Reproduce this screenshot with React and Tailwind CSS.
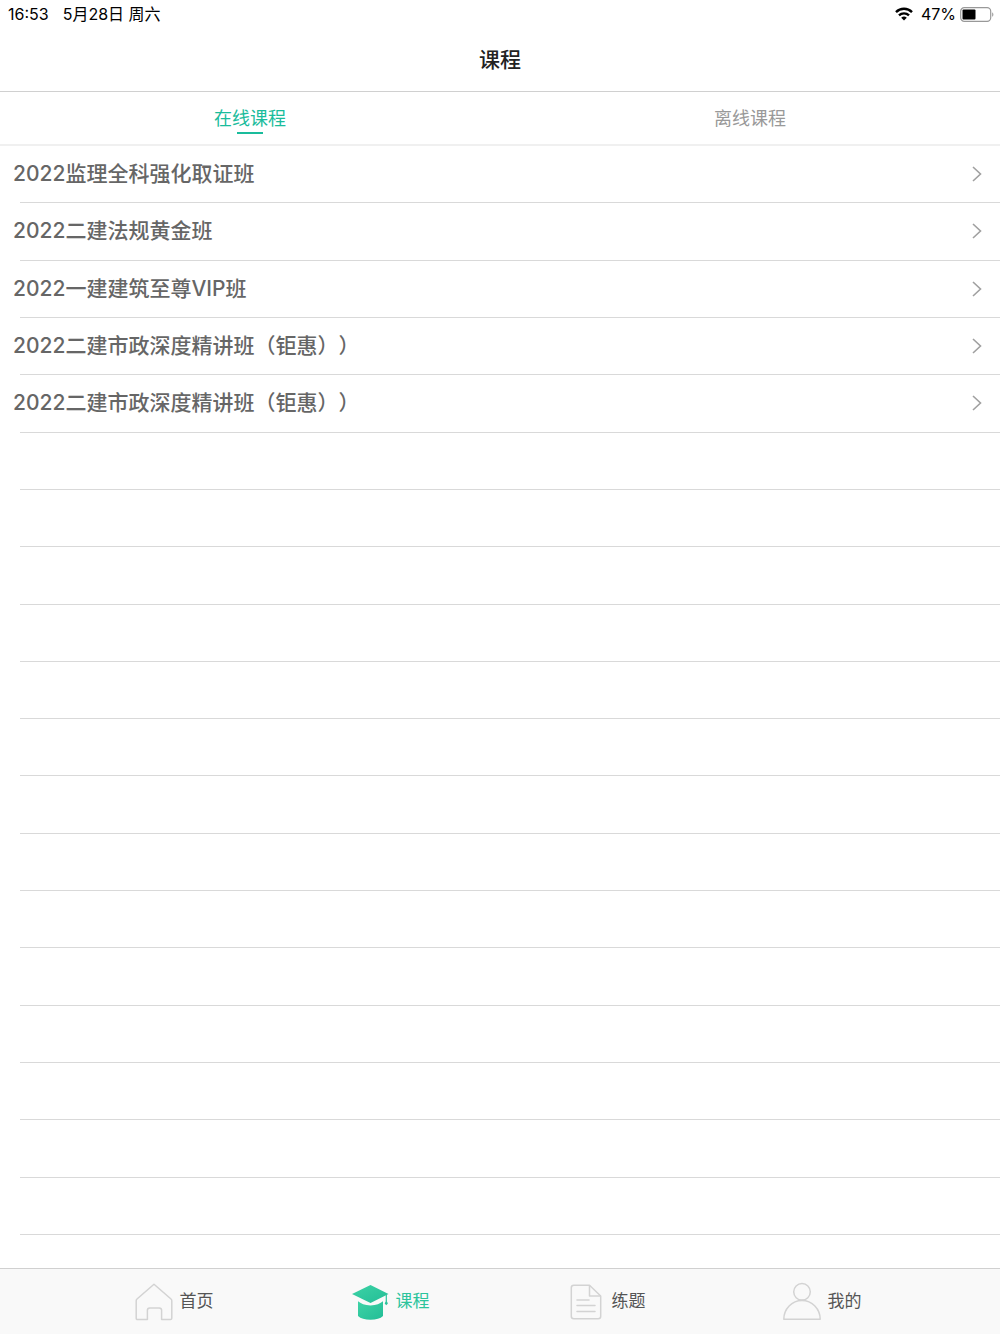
import React, { useState } from "react";

const courses = [
  "2022监理全科强化取证班",
  "2022二建法规黄金班",
  "2022一建建筑至尊VIP班",
  "2022二建市政深度精讲班（钜惠））",
  "2022二建市政深度精讲班（钜惠））",
];

// the list always shows this many lines, filled or not
const ROWS = 19;

const StatusBar = () => (
  <div className="flex h-7 items-center justify-between pl-2 pr-1.5 text-base text-black">
    <div className="flex gap-3.5">
      <span>16:53</span>
      <span>5月28日 周六</span>
    </div>
    <div className="flex items-center">
      <svg className="mr-2 h-[14px] w-[18px]" viewBox="0 0 18 14">
        <g fill="none" stroke="#000" strokeWidth="2.4">
          <path d="M1 5.100a11.400 11.400 0 0 1 16 0" />
          <path d="M4 8.400a7.200 7.200 0 0 1 10 0" />
        </g>
        <path d="M9 13.600 6.200 10.800a4 4 0 0 1 5.600 0Z" fill="#000" />
      </svg>
      <span className="mr-1">47%</span>
      <svg className="h-[15px] w-[34px]" viewBox="0 0 34 15">
        <rect x="0.7" y="0.7" width="30" height="13.6" rx="3.6" fill="none" stroke="#999" strokeWidth="1.2" />
        <rect x="2.5" y="2.5" width="13" height="10" rx="1" fill="#000" />
        <path d="M32.200 5.200c1.600.7 1.600 3.900 0 4.600Z" fill="#999" />
      </svg>
    </div>
  </div>
);

const HomeIcon = () => (
  <svg className="h-10 w-[38px]" viewBox="0 0 38 40" fill="none" stroke="#d3d3d3" strokeWidth="1.5" strokeLinejoin="round">
    <path d="M19 2.200 36 17q.8.7.8 1.800v17.400q0 1.400-1.400 1.400h-8.800V28.300q0-2.300-2.300-2.300h-9.600q-2.300 0-2.300 2.300v9.300H2.600q-1.400 0-1.400-1.400V18.800q0-1.100.8-1.800Z" />
  </svg>
);

const CourseIcon = () => (
  <svg className="h-10 w-[38px]" viewBox="0 0 38 40">
    <defs>
      <linearGradient id="cap" x1="0" y1="0" x2="1" y2="1">
        <stop offset="0" stopColor="#3ed3a6" />
        <stop offset="1" stopColor="#22bd96" />
      </linearGradient>
    </defs>
    <path d="M19.500 3 37.500 12 19.500 21 1 12Z" fill="url(#cap)" />
    <path d="M7 19.200Q11 22.800 19.500 23.600 28 22.800 32 19.200V34Q28 37.800 19.500 37.800T7 34Z" fill="url(#cap)" />
    <path d="M35.300 12.500V19" stroke="#2cc49c" strokeWidth="1.2" />
    <path d="m35.300 18 1.600 3.400-1.600 1.800-1.600-1.800Z" fill="#2cc49c" />
  </svg>
);

const PracticeIcon = () => (
  <svg className="h-10 w-[38px]" viewBox="0 0 38 40" fill="none" stroke="#d3d3d3" strokeWidth="1.5" strokeLinejoin="round">
    <path d="M22.500 3.300H6.800Q4.300 3.300 4.300 5.800v28.400q0 2.500 2.500 2.500h24.400q2.500 0 2.500-2.500V14Z" />
    <path d="M22.500 3.300V14h11.200" />
    <path d="M10 18h12M10 23.500h18M10 29.500h18" strokeLinecap="round" />
  </svg>
);

const MineIcon = () => (
  <svg className="h-10 w-[38px]" viewBox="0 0 38 40" fill="none" stroke="#d3d3d3" strokeWidth="1.5" strokeLinejoin="round">
    <circle cx="19" cy="9.800" r="8.300" />
    <path d="M.8 37.200a18.200 18.800 0 0 1 36.400 0Z" />
  </svg>
);

const menu = [
  { title: "首页", icon: <HomeIcon /> },
  { title: "课程", icon: <CourseIcon /> },
  { title: "练题", icon: <PracticeIcon /> },
  { title: "我的", icon: <MineIcon /> },
];

const App = () => {
  const [tab, setTab] = useState("在线课程");
  const [page, setPage] = useState("课程");

  return (
    <div className="flex min-h-screen flex-col bg-white font-['Inter','Noto_Sans_CJK_SC',sans-serif] [text-spacing-trim:space-all]" lang="zh-CN">
      <header className="border-b border-[#d0d0d0]">
        <StatusBar />
        <h1 className="flex h-[63px] items-center justify-center text-[21px] font-medium text-[#222]">
          课程
        </h1>
      </header>

      <nav className="grid h-[54px] grid-cols-2 border-b-2 border-[#f0f0f0]">
        {["在线课程", "离线课程"].map((name) => (
          <button
            key={name}
            onClick={() => setTab(name)}
            className={`flex flex-col items-center pt-3.5 text-[18px] leading-[26px] ${
              tab === name ? "text-[#1abc9c]" : "text-[#999]"
            }`}
          >
            {name}
            {tab === name && <span className="h-0.5 w-[26px] bg-[#1abc9c]"></span>}
          </button>
        ))}
      </nav>

      <main className="flex flex-1 pb-[33px]">
        <ul className="flex flex-1 flex-col">
          {Array.from({ length: ROWS }, (_, i) => (
            <li key={i} className="flex min-h-14 flex-1 flex-col">
              {courses[i] ? (
                <a
                  href="#"
                  className="flex flex-1 items-center justify-between pl-[13px] pr-[18px] text-[21px] leading-8 font-medium text-[#666]"
                >
                  {courses[i]}
                  <svg className="h-4 w-[10px]" viewBox="0 0 10 16" fill="none" stroke="#a0a0a0" strokeWidth="1.6">
                    <path d="m1 1 7.500 7L1 15" />
                  </svg>
                </a>
              ) : (
                <div className="flex-1"></div>
              )}
              <div className="ml-5 h-px bg-[#d9d9d9]"></div>
            </li>
          ))}
        </ul>
      </main>

      <footer className="grid h-[66px] grid-cols-4 border-t border-[#d0d0d0] bg-[#f9f9f9] pl-[66px] pr-[70px]">
        {menu.map((item) => (
          <button
            key={item.title}
            onClick={() => setPage(item.title)}
            className={`flex items-center justify-center gap-[7px] text-[17px] ${
              page === item.title ? "text-[#2cc49c]" : "text-[#555]"
            }`}
          >
            {item.icon}
            {item.title}
          </button>
        ))}
      </footer>
    </div>
  );
};

export default App;
